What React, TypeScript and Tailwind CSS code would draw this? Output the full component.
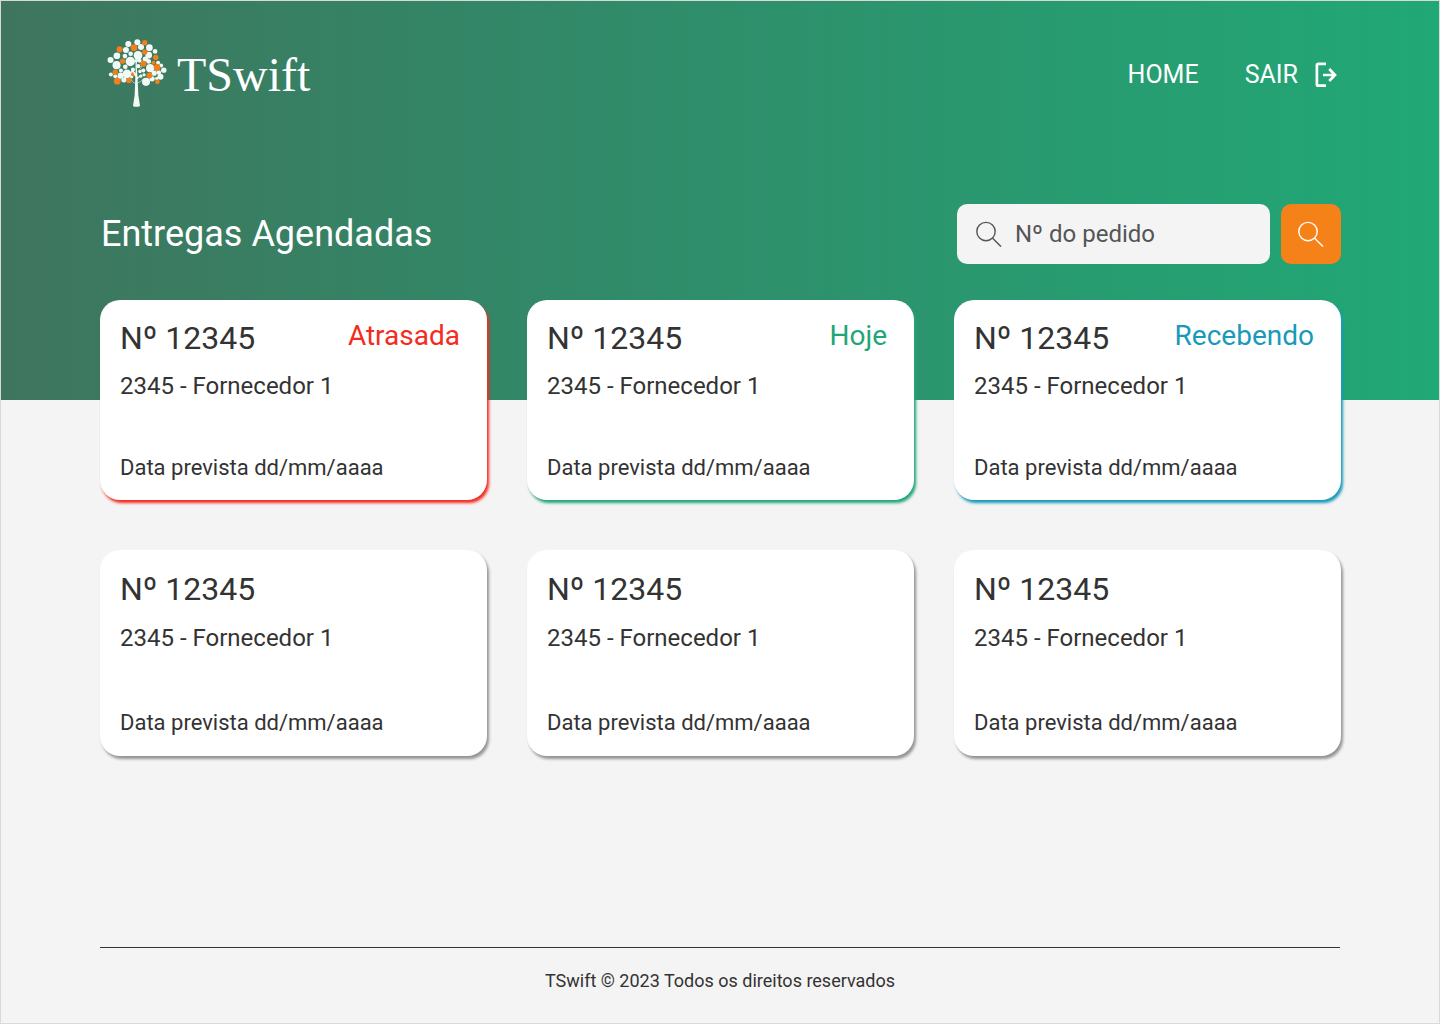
import React from "react";

type Status = { label: string; text: string; shadow: string };

const late: Status = {
  label: "Atrasada",
  text: "text-[#f52a20]",
  shadow: "shadow-[2px_3px_3px_#f52a20]",
};
const today: Status = {
  label: "Hoje",
  text: "text-[#21a677]",
  shadow: "shadow-[2px_3px_3px_#21a677]",
};
const receiving: Status = {
  label: "Recebendo",
  text: "text-[#189ab8]",
  shadow: "shadow-[2px_3px_3px_#189ab8]",
};

type Delivery = { id: number; order: string; supplier: string; date: string; status?: Status };

const base = { order: "12345", supplier: "2345 - Fornecedor 1", date: "dd/mm/aaaa" };
const highlighted: Delivery[] = [
  { id: 1, ...base, status: late },
  { id: 2, ...base, status: today },
  { id: 3, ...base, status: receiving },
];
const upcoming: Delivery[] = [
  { id: 4, ...base },
  { id: 5, ...base },
  { id: 6, ...base },
];

const whiteDots = [
  [96, 42, 9], [123, 37, 9], [134, 51, 9], [159, 53, 10], [89, 60, 9], [62, 77, 10],
  [43, 90, 9], [61, 105, 12], [86, 78, 7], [103, 71, 7], [125, 76, 13], [102, 94, 14],
  [147, 87, 8], [157, 75, 10], [176, 64, 7], [157, 94, 7], [161, 114, 12],
  [185, 98, 6], [194, 106, 6], [202, 120, 8], [180, 116, 6], [187, 127, 7], [173, 129, 8],
  [192, 140, 9], [167, 146, 8], [149, 155, 12], [181, 145, 5], [87, 110, 7], [74, 121, 6],
  [92, 131, 13], [73, 136, 9], [44, 133, 6], [57, 138, 6], [83, 149, 8], [110, 118, 6],
  [141, 121, 6], [131, 124, 5], [106, 140, 5], [133, 138, 5], [143, 134, 5], [126, 108, 6],
  [120, 92, 5], [68, 145, 5], [108, 126, 5], [130, 92, 6],
];
const orangeDots = [
  [145, 38, 8], [113, 53, 10], [70, 58, 9], [145, 66, 8], [79, 93, 8], [141, 101, 9],
  [178, 82, 8], [171, 98, 6], [182, 112, 10], [57, 126, 8], [63, 153, 10], [98, 151, 8],
  [112, 132, 7], [159, 136, 9], [183, 155, 7],
];

function TreeLogo() {
  return (
    <svg viewBox="30 24 184 212" className="h-[71px] w-[62px]" aria-hidden="true">
      {whiteDots.map(([x, y, r]) => (
        <circle key={`w${x}-${y}`} cx={x} cy={y} r={r} fill="#f2faf6" />
      ))}
      {orangeDots.map(([x, y, r]) => (
        <circle key={`o${x}-${y}`} cx={x} cy={y} r={r} fill="#f27f1b" />
      ))}
      <path
        d="M118 86c-1 20 0 32 0 44l-12-16-2 1 13 25-2 55-5 32q10 5 21 0l-5-32-2-48 14-16-14 10c-2-18-3-30-2-52z"
        fill="#f2faf6"
      />
      <path
        d="M124 158q12-2 15-12M117 160q-8-2-12-12M124 124q10-6 12-16"
        fill="none"
        stroke="#cfe3da"
        strokeWidth="2"
      />
    </svg>
  );
}

function SearchIcon() {
  return (
    <svg viewBox="0 0 26 26" className="size-[26px] shrink-0" fill="none" stroke="currentColor" strokeWidth="1.4" aria-hidden="true">
      <circle cx="10" cy="10.6" r="9.2" />
      <path d="M16.6 17.2 25 25.6" />
    </svg>
  );
}

function ExitIcon() {
  return (
    <svg viewBox="0 0 22 26" className="h-[26px] w-[22px]" fill="none" stroke="currentColor" strokeWidth="2.7" aria-hidden="true">
      <path d="M11 1.9H3.4Q1.9 1.9 1.9 3.4V22.2Q1.9 23.7 3.4 23.7H11" />
      <path d="M8 13h12M14.2 7l5.8 6-5.8 6" strokeWidth="2.7" />
    </svg>
  );
}

function Card({ delivery }: { delivery: Delivery }) {
  const { status } = delivery;
  return (
    <article
      className={`flex flex-col rounded-[20px] bg-white px-5 text-[#333333] ${
        status ? `min-h-[200px] pt-5 pb-4 ${status.shadow}` : "min-h-[206px] pt-5 pb-[17px] shadow-[2px_3px_3px_#949494]"
      }`}
    >
      <div className="flex items-start justify-between pr-[7px]">
        <h2 className={status ? "text-[32px] leading-9" : "text-[32px] leading-[38px]"}>Nº {delivery.order}</h2>
        {status && <span className={`text-[28px] leading-8 ${status.text}`}>{status.label}</span>}
      </div>
      <p className="mt-[14px] text-2xl leading-8">{delivery.supplier}</p>
      <p className="mt-auto text-[22px] leading-8">Data prevista {delivery.date}</p>
    </article>
  );
}

export default function App() {
  return (
    <div className="flex min-h-screen flex-col border border-[#d9d9d9] bg-[#f4f4f4] font-['Roboto',sans-serif]">
      <div className="bg-[linear-gradient(90deg,#3f755f,#338667_33%,#21a877)] pr-[98px] pl-[99px] pb-[136px] text-white">
        <header className="flex items-center justify-between pt-9">
          <a href="#" className="flex items-center gap-[9px] pl-[6px]" aria-label="TSwift">
            <TreeLogo />
            <span className="pt-1 font-['Liberation_Serif',serif] text-5xl leading-[68px]">TSwift</span>
          </a>
          <nav className="flex items-center gap-[46px] pt-[3px] pr-1 text-[25px] leading-8">
            <a href="#">HOME</a>
            <a href="#" className="flex items-center gap-[17px]">
              SAIR
              <ExitIcon />
            </a>
          </nav>
        </header>
        <div className="mt-[95px] flex items-center justify-between">
          <h1 className="pl-[1px] text-4xl">Entregas Agendadas</h1>
          <form className="flex gap-[11px]" onSubmit={(e) => e.preventDefault()}>
            <label className="flex h-[60px] w-[313px] items-center gap-[13px] rounded-[10px] bg-[#f4f4f4] px-[19px] text-[#555555]">
              <SearchIcon />
              <input
                type="text"
                aria-label="Nº do pedido"
                placeholder="Nº do pedido"
                className="min-w-0 flex-1 bg-transparent text-2xl outline-none placeholder:text-[#555555]"
              />
            </label>
            <button type="submit" aria-label="Buscar" className="flex size-[60px] items-center justify-center rounded-[10px] bg-[#f58218]">
              <SearchIcon />
            </button>
          </form>
        </div>
      </div>
      <main className="-mt-[100px] flex-1 pr-[98px] pl-[99px]">
        <section className="grid grid-cols-3 gap-10">
          {highlighted.map((d) => (
            <Card key={d.id} delivery={d} />
          ))}
        </section>
        <section className="mt-[50px] grid grid-cols-3 gap-10">
          {upcoming.map((d) => (
            <Card key={d.id} delivery={d} />
          ))}
        </section>
      </main>
      <footer className="mx-[99px] border-t border-[#333333] pt-5 pb-[29px] text-center text-lg leading-[26px] text-[#333333]">
        TSwift © 2023 Todos os direitos reservados
      </footer>
    </div>
  );
}
